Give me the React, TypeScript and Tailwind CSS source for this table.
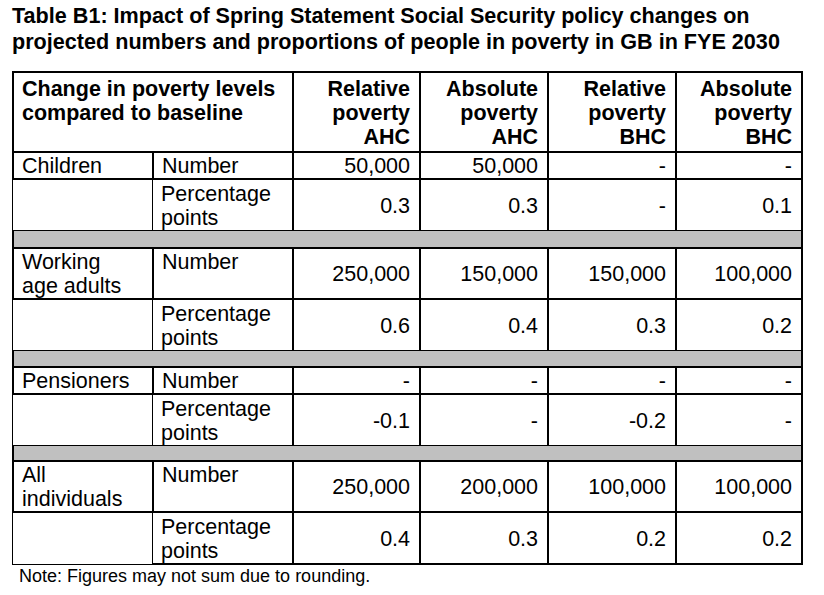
import React from "react";

interface Group {
  name: string;
  number: string[];
  points: string[];
}

const groups: Group[] = [
  { name: "Children", number: ["50,000", "50,000", "-", "-"], points: ["0.3", "0.3", "-", "0.1"] },
  { name: "Working\nage adults", number: ["250,000", "150,000", "150,000", "100,000"], points: ["0.6", "0.4", "0.3", "0.2"] },
  { name: "Pensioners", number: ["-", "-", "-", "-"], points: ["-0.1", "-", "-0.2", "-"] },
  { name: "All\nindividuals", number: ["250,000", "200,000", "100,000", "100,000"], points: ["0.4", "0.3", "0.2", "0.2"] },
];

const headers = [
  ["Relative", "poverty", "AHC"],
  ["Absolute", "poverty", "AHC"],
  ["Relative", "poverty", "BHC"],
  ["Absolute", "poverty", "BHC"],
];

// gray spacer rows between the groups
const bandHeights = ["h-[17px]", "h-[16px]", "h-[15px]"];

export default function App() {
  return (
    <div className="w-[824px] h-[595px] bg-white text-black pl-[12px] pt-[3px] font-['Liberation_Sans',Arial,sans-serif]">
      <h1 className="w-[800px] text-[21.6px] leading-[26px] font-bold">
        Table B1: Impact of Spring Statement Social Security policy changes on projected numbers and proportions of people in poverty in GB in FYE 2030
      </h1>

      <table className="mt-[16px] w-[791px] table-fixed border-separate border-spacing-0 text-[21.5px] leading-[24px]">
        <colgroup>
          <col className="w-[140px]" />
          <col className="w-[140px]" />
          <col className="w-[127px]" />
          <col className="w-[128px]" />
          <col className="w-[128px]" />
          <col className="w-[128px]" />
        </colgroup>
        <thead>
          <tr>
            <th colSpan={2} className="border-l-2 border-t-2 border-black px-[8px] pt-[4px] pb-[2px] text-left align-top font-bold">
              Change in poverty levels compared to baseline
            </th>
            {headers.map((h, i) => (
              <th
                key={i}
                className={`border-l-2 border-t-2 border-black pl-[8px] pr-[9px] pt-[4px] pb-[2px] text-right align-top font-bold ${i === 3 ? "border-r-2" : ""}`}
              >
                {h.map((line) => (
                  <div key={line}>{line}</div>
                ))}
              </th>
            ))}
          </tr>
        </thead>
        <tbody>
          {groups.map((g, gi) => {
            const last = gi === groups.length - 1;
            return (
              <React.Fragment key={g.name}>
                <tr>
                  <td className="border-l-2 border-t-2 border-black px-[8px] pt-px align-top whitespace-pre-line">{g.name}</td>
                  <td className="border-l-2 border-t-2 border-black px-[8px] pt-px align-top">Number</td>
                  {g.number.map((v, i) => (
                    <td
                      key={i}
                      className={`border-l-2 border-t-2 border-black pl-[8px] pr-[9px] pt-px text-right align-middle ${i === 3 ? "border-r-2" : ""}`}
                    >
                      {v}
                    </td>
                  ))}
                </tr>
                <tr>
                  <td className={`border-l border-t-2 border-black px-[8px] pt-[2px] ${last ? "border-b" : ""}`} />
                  <td className={`border-l border-t-2 border-black px-[8px] pt-[2px] align-top ${last ? "border-b-2" : ""}`}>
                    Percentage points
                  </td>
                  {g.points.map((v, i) => (
                    <td
                      key={i}
                      className={`border-l-2 border-t-2 border-black pl-[8px] pr-[9px] pt-[2px] text-right align-middle ${i === 3 ? "border-r-2" : ""} ${last ? "border-b-2" : ""}`}
                    >
                      {v}
                    </td>
                  ))}
                </tr>
                {!last && (
                  <tr>
                    <td colSpan={6} className={`border-l-2 border-r-2 border-t border-black bg-[#c0c0c0] p-0 ${bandHeights[gi]}`} />
                  </tr>
                )}
              </React.Fragment>
            );
          })}
        </tbody>
      </table>

      <p className="mt-[1px] pl-[7px] text-[18px] leading-[21px]">Note: Figures may not sum due to rounding.</p>
    </div>
  );
}
